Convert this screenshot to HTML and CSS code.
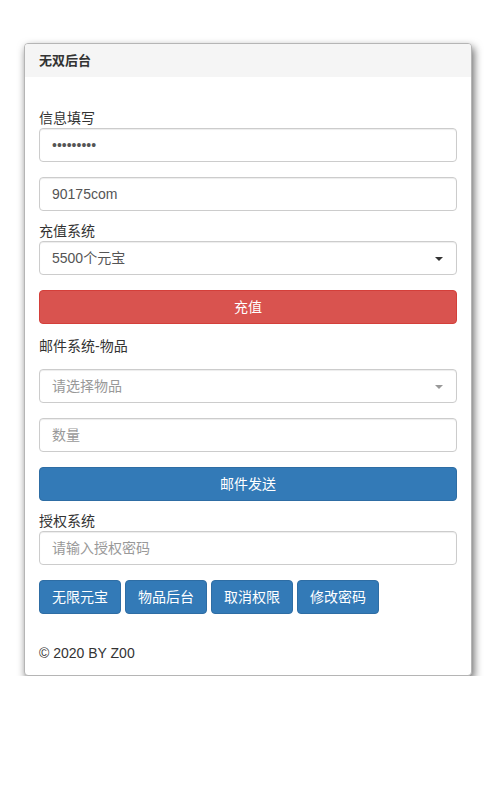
FILE: index.html
```html
<!DOCTYPE html>
<html lang="zh">
<head>
<meta charset="utf-8">
<title>无双后台</title>
<link rel="stylesheet" href="styles.css">
</head>
<body>
<div class="page">
  <div class="card">
    <div class="card-head">无双后台</div>
    <div class="card-body">
      <label class="lbl lbl-first">信息填写</label>
      <div class="field">•••••••••</div>
      <div class="field gap">90175com</div>
      <label class="lbl lbl-mid">充值系统</label>
      <div class="field select"><span>5500个元宝</span><i class="caret"></i></div>
      <button class="btn btn-red btn-block gap">充值</button>
      <label class="lbl lbl-mail">邮件系统-物品</label>
      <div class="field select placeholder"><span>请选择物品</span><i class="caret caret-gray"></i></div>
      <div class="field placeholder gap">数量</div>
      <button class="btn btn-blue btn-block gap">邮件发送</button>
      <label class="lbl lbl-mid">授权系统</label>
      <div class="field placeholder">请输入授权密码</div>
      <div class="btn-row">
        <button class="btn btn-blue">无限元宝</button>
        <button class="btn btn-blue">物品后台</button>
        <button class="btn btn-blue">取消权限</button>
        <button class="btn btn-blue">修改密码</button>
      </div>
      <div class="footer">© 2020 BY Z00</div>
    </div>
  </div>
</div>
</body>
</html>
```
FILE: styles.css
```css
* { box-sizing: border-box; }
html, body { margin: 0; padding: 0; background: #fff; }
body {
  font-family: "Liberation Sans", "Noto Sans CJK SC", sans-serif;
  font-size: 14px;
  line-height: 20px;
  color: #333;
}
.page { padding: 43px 26px 0 24px; }
.card {
  border: 1px solid #b5b5b5;
  border-radius: 4px;
  background: #fff;
  box-shadow: 2px 4px 8px rgba(0,0,0,0.6);
  overflow: hidden;
}
.card-head {
  background: #f5f5f5;
  height: 33px;
  padding: 7px 14px 0;
  font-size: 13px;
  font-weight: bold;
  line-height: 20px;
  color: #333;
}
.card-body { padding: 0 14px 12px; }
.lbl { display: block; height: 20px; line-height: 20px; color: #333; }
.lbl-first { margin-top: 31px; }
.lbl-mid { margin-top: 10px; }
.lbl-mail { margin-top: 12px; margin-bottom: 13px; }
.field {
  position: relative;
  height: 34px;
  border: 1px solid #ccc;
  border-radius: 4px;
  padding: 6px 12px;
  line-height: 20px;
  color: #555;
  background: #fff;
  box-shadow: inset 0 1px 1px rgba(0,0,0,0.075);
}
.field.placeholder { color: #999; }
.gap { margin-top: 15px; }
.caret {
  position: absolute;
  right: 13px;
  top: 15px;
  width: 0; height: 0;
  border-left: 4px solid transparent;
  border-right: 4px solid transparent;
  border-top: 4px solid #333;
}
.caret-gray { border-top-color: #999; }
.btn {
  display: inline-block;
  height: 34px;
  padding: 6px 12px;
  border: 1px solid transparent;
  border-radius: 4px;
  font-family: inherit;
  font-size: 14px;
  line-height: 20px;
  color: #fff;
  text-align: center;
  cursor: pointer;
}
.btn-block { display: block; width: 100%; }
.btn-red { background: #d9534f; border-color: #d43f3a; }
.btn-blue { background: #337ab7; border-color: #2e6da4; }
.btn-row { display: flex; gap: 4px; margin-top: 15px; }
.btn-row .btn { width: 82px; padding: 6px 0; }
.footer { margin-top: 29px; line-height: 20px; color: #333; }
```
